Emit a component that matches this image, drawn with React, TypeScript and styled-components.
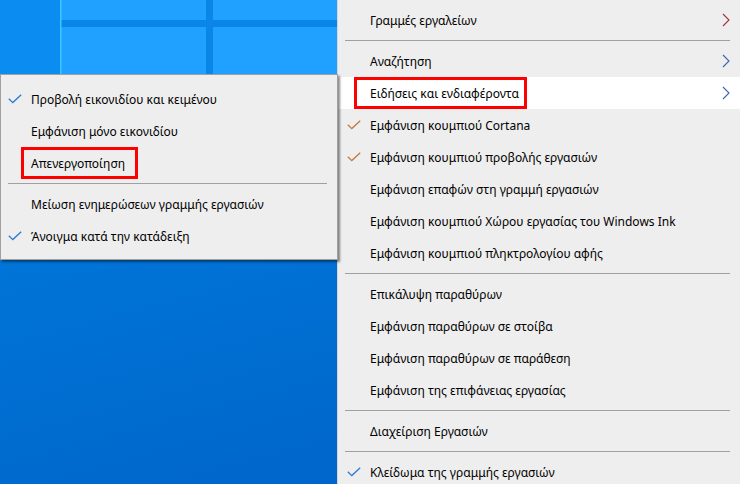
import React from 'react';
import styled, {createGlobalStyle} from 'styled-components';

const GlobalStyle = createGlobalStyle`
  html, body {
    margin: 0;
    padding: 0;
    width: 740px;
    height: 484px;
    overflow: hidden;
  }
  body {
    font-family: "Noto Sans", "Open Sans", "DejaVu Sans", sans-serif;
    font-size: 12px;
    color: #000;
  }
`;

const Screen = styled.div`
  display: flex;
  width: 740px;
  height: 484px;
  overflow: hidden;
`;

const Desktop = styled.div`
  width: 337px;
  flex: none;
  display: flex;
  flex-direction: column;
  position: relative;
  z-index: 2;
  background: linear-gradient(165deg, #0a86e6 0%, #0077da 35%, #0066cb 100%);
`;

const Wallpaper = styled.svg`
  display: block;
  flex: none;
`;

const Menu = styled.div<{$popup?: boolean}>`
  display: flex;
  flex-direction: column;
  background: #eeeeee;
  ${p =>
    p.$popup
      ? `
    border: 1px solid #a0a0a0;
    box-shadow: 2px 2px 2px rgba(0, 0, 0, 0.45);
    padding: 8px 0 7px;
    margin-right: -1px;
  `
      : `
    flex: 1;
    border-left: 1px solid #d6d6d6;
    padding-top: 4px;
  `}
`;

const Item = styled.div<{$indent: number; $active?: boolean}>`
  display: flex;
  align-items: center;
  height: 32px;
  flex: none;
  box-sizing: border-box;
  padding-left: ${p => p.$indent}px;
  background: ${p => (p.$active ? '#ffffff' : 'transparent')};
  white-space: nowrap;
`;

const CheckSlot = styled.span`
  width: 23px;
  flex: none;
  display: flex;
  align-items: center;
`;

const Marked = styled.span<{$before: number; $after: number}>`
  align-self: stretch;
  display: inline-flex;
  align-items: center;
  box-sizing: border-box;
  border: 3px solid #ff0000;
  padding: 0 ${p => p.$after}px 0 ${p => p.$before}px;
  margin-left: -${p => p.$before + 3}px;
`;

const Chevron = styled.svg`
  margin-left: auto;
  margin-right: 10px;
  flex: none;
`;

const Separator = styled.div`
  height: 1px;
  flex: none;
  background: #a0a0a0;
  margin: 4px 10px 4px 7px;
`;

const Check: React.FC<{color: string}> = ({color}) => (
  <svg width="14" height="10" viewBox="0 0 14 10">
    <path d="M0.8 4.8 L4.8 8.6 L13.2 0.8" fill="none" stroke={color} strokeWidth="1.3" />
  </svg>
);

const Arrow: React.FC<{color: string}> = ({color}) => (
  <Chevron width="8" height="14" viewBox="0 0 8 14">
    <path d="M1 1 L7 7 L1 13" fill="none" stroke={color} strokeWidth="1.1" />
  </Chevron>
);

type Row =
  | {sep: true}
  | {
      sep?: false;
      label: string;
      check?: string;
      arrow?: string;
      active?: boolean;
      mark?: [number, number];
    };

const leftRows: Row[] = [
  {label: 'Προβολή εικονιδίου και κειμένου', check: '#2a7bd4'},
  {label: 'Εμφάνιση μόνο εικονιδίου'},
  {label: 'Απενεργοποίηση', mark: [7, 10]},
  {sep: true},
  {label: 'Μείωση ενημερώσεων γραμμής εργασιών'},
  {label: 'Άνοιγμα κατά την κατάδειξη', check: '#2a7bd4'},
];

const rightRows: Row[] = [
  {label: 'Γραμμές εργαλείων', arrow: '#a03040'},
  {sep: true},
  {label: 'Αναζήτηση', arrow: '#3a64b0'},
  {label: 'Ειδήσεις και ενδιαφέροντα', arrow: '#3a64b0', active: true, mark: [13, 5]},
  {label: 'Εμφάνιση κουμπιού Cortana', check: '#c47a3c'},
  {label: 'Εμφάνιση κουμπιού προβολής εργασιών', check: '#c47a3c'},
  {label: 'Εμφάνιση επαφών στη γραμμή εργασιών'},
  {label: 'Εμφάνιση κουμπιού Χώρου εργασίας του Windows Ink'},
  {label: 'Εμφάνιση κουμπιού πληκτρολογίου αφής'},
  {sep: true},
  {label: 'Επικάλυψη παραθύρων'},
  {label: 'Εμφάνιση παραθύρων σε στοίβα'},
  {label: 'Εμφάνιση παραθύρων σε παράθεση'},
  {label: 'Εμφάνιση της επιφάνειας εργασίας'},
  {sep: true},
  {label: 'Διαχείριση Εργασιών'},
  {sep: true},
  {label: 'Κλείδωμα της γραμμής εργασιών', check: '#2a7bd4'},
];

const MenuRows: React.FC<{rows: Row[]; indent: number}> = ({rows, indent}) => (
  <>
    {rows.map((row, i) =>
      row.sep ? (
        <Separator key={i} />
      ) : (
        <Item key={i} $indent={indent} $active={row.active}>
          <CheckSlot>{row.check ? <Check color={row.check} /> : null}</CheckSlot>
          {row.mark ? (
            <Marked $before={row.mark[0]} $after={row.mark[1]}>
              {row.label}
            </Marked>
          ) : (
            <span>{row.label}</span>
          )}
          {row.arrow ? <Arrow color={row.arrow} /> : null}
        </Item>
      )
    )}
  </>
);

const App: React.FC = () => (
  <>
    <GlobalStyle />
    <Screen>
      <Desktop>
        <Wallpaper width="337" height="74" viewBox="0 0 337 74">
          <rect x="0" y="0" width="337" height="74" fill="#0b8cf0" />
          <rect x="60" y="0" width="277" height="74" fill="#20a0ff" />
          <rect x="60" y="20" width="277" height="7" fill="#0a86e8" />
          <rect x="206" y="0" width="7" height="74" fill="#0a86e8" />
          <rect x="60" y="0" width="1.5" height="74" fill="#3cc6ff" />
        </Wallpaper>
        <Menu $popup>
          <MenuRows rows={leftRows} indent={7} />
        </Menu>
      </Desktop>
      <Menu>
        <MenuRows rows={rightRows} indent={9} />
      </Menu>
    </Screen>
  </>
);

export default App;
